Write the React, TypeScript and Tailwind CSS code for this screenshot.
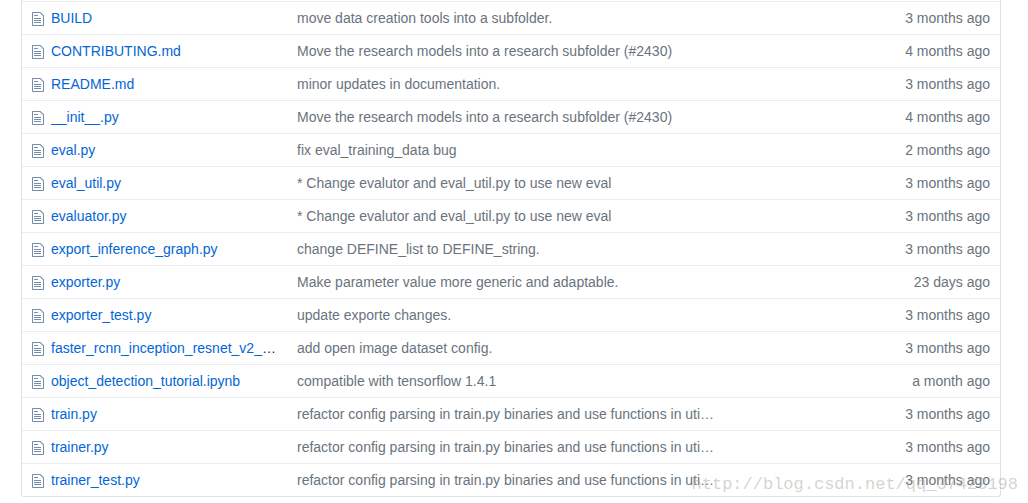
type FileEntry = {
  name: string;
  message: string;
  age: string;
  clipped?: boolean;
};

const files: FileEntry[] = [
  { name: "BUILD", message: "move data creation tools into a subfolder.", age: "3 months ago" },
  { name: "CONTRIBUTING.md", message: "Move the research models into a research subfolder (#2430)", age: "4 months ago" },
  { name: "README.md", message: "minor updates in documentation.", age: "3 months ago" },
  { name: "__init__.py", message: "Move the research models into a research subfolder (#2430)", age: "4 months ago" },
  { name: "eval.py", message: "fix eval_training_data bug", age: "2 months ago" },
  { name: "eval_util.py", message: "* Change evalutor and eval_util.py to use new eval", age: "3 months ago" },
  { name: "evaluator.py", message: "* Change evalutor and eval_util.py to use new eval", age: "3 months ago" },
  { name: "export_inference_graph.py", message: "change DEFINE_list to DEFINE_string.", age: "3 months ago" },
  { name: "exporter.py", message: "Make parameter value more generic and adaptable.", age: "23 days ago" },
  { name: "exporter_test.py", message: "update exporte changes.", age: "3 months ago" },
  { name: "faster_rcnn_inception_resnet_v2_", clipped: true, message: "add open image dataset config.", age: "3 months ago" },
  { name: "object_detection_tutorial.ipynb", message: "compatible with tensorflow 1.4.1", age: "a month ago" },
  { name: "train.py", message: "refactor config parsing in train.py binaries and use functions in uti…", age: "3 months ago" },
  { name: "trainer.py", message: "refactor config parsing in train.py binaries and use functions in uti…", age: "3 months ago" },
  { name: "trainer_test.py", message: "refactor config parsing in train.py binaries and use functions in uti…", age: "3 months ago" },
];

function FileIcon() {
  return (
    <svg
      viewBox="0 0 12 16"
      className="h-4 w-3 fill-[#032f62]/55"
      aria-hidden="true"
    >
      <path
        fillRule="evenodd"
        d="M6 5H2V4h4v1zM2 8h7V7H2v1zm0 2h7V9H2v1zm0 2h7v-1H2v1zm10-7.5V14c0 .55-.45 1-1 1H1c-.55 0-1-.45-1-1V2c0-.55.45-1 1-1h7.5L12 4.5zM11 5L8 2H1v12h10V5z"
      />
    </svg>
  );
}

function FileRow({ file }: { file: FileEntry }) {
  return (
    <tr className="border-t border-[#eaecef]">
      <td className="pt-2 pb-1.5 pl-2.5">
        <FileIcon />
      </td>
      <td className="truncate py-1.5 pr-4 text-[#24292e]">
        <a href="#" className="text-[#0366d6] hover:underline">
          {file.name}
        </a>
        {file.clipped && "…"}
      </td>
      <td className="truncate py-1.5 pr-4">{file.message}</td>
      <td className="py-1.5 pr-2.5 text-right whitespace-nowrap">{file.age}</td>
    </tr>
  );
}

export default function App() {
  return (
    <main className="relative bg-white pr-[27px] pb-1.5 pl-[21px] font-['Liberation_Sans',Arial,sans-serif] text-sm text-[#6a737d]">
      <div className="rounded-b-[3px] border border-t-0 border-[#dfe2e5] pt-px">
        <table className="w-full table-fixed border-collapse">
          <colgroup>
            <col className="w-[29px]" />
            <col className="w-[246px]" />
            <col />
            <col className="w-[260px]" />
          </colgroup>
          <tbody>
            {files.map((file) => (
              <FileRow key={file.name} file={file} />
            ))}
          </tbody>
        </table>
      </div>

      {/* Watermark */}
      <span className="pointer-events-none absolute right-2.5 bottom-1.5 font-['Liberation_Mono',monospace] text-[17px] leading-6 text-[#aaaa9b]/50">
        http://blog.csdn.net/qq_37423198
      </span>
    </main>
  );
}
